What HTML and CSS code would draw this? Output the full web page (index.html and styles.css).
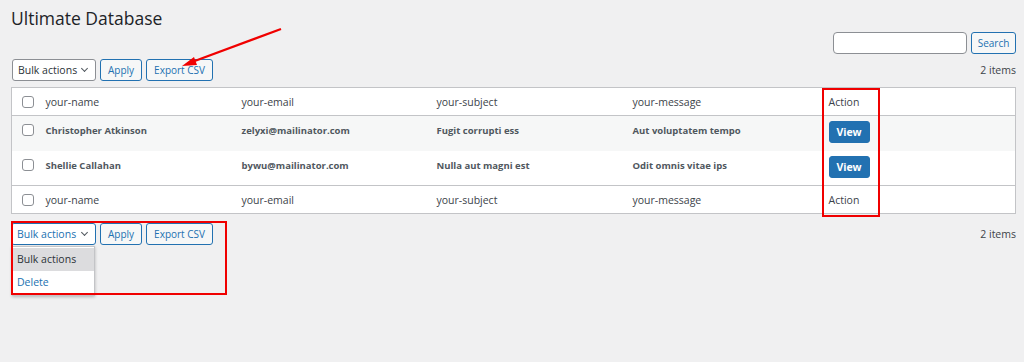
FILE: index.html
```html
<!DOCTYPE html>
<html>
<head>
<meta charset="utf-8">
<link rel="stylesheet" href="styles.css">
</head>
<body>
<div class="wrap">
  <h1 class="title">Ultimate Database</h1>
  <div class="search-row">
    <input class="search-input" type="text">
    <button class="btn btn-search">Search</button>
  </div>
  <div class="toolbar">
    <div class="actions">
      <div class="select">Bulk actions <span class="chev"></span></div>
      <button class="btn">Apply</button>
      <button class="btn">Export CSV</button>
    </div>
    <span class="count">2 items</span>
  </div>
  <table class="list">
    <thead>
      <tr>
        <td class="cb"><span class="box"></span></td>
        <td class="c-name">your-name</td>
        <td class="c-email">your-email</td>
        <td class="c-subj">your-subject</td>
        <td class="c-msg">your-message</td>
        <td class="c-act">Action</td>
      </tr>
    </thead>
    <tbody>
      <tr class="alt">
        <td class="cb"><span class="box"></span></td>
        <td><b>Christopher Atkinson</b></td>
        <td><b>zelyxi@mailinator.com</b></td>
        <td><b>Fugit corrupti ess</b></td>
        <td><b>Aut voluptatem tempo</b></td>
        <td><button class="view">View</button></td>
      </tr>
      <tr>
        <td class="cb"><span class="box"></span></td>
        <td><b>Shellie Callahan</b></td>
        <td><b>bywu@mailinator.com</b></td>
        <td><b>Nulla aut magni est</b></td>
        <td><b>Odit omnis vitae ips</b></td>
        <td><button class="view">View</button></td>
      </tr>
    </tbody>
    <tfoot>
      <tr>
        <td class="cb"><span class="box"></span></td>
        <td>your-name</td>
        <td>your-email</td>
        <td>your-subject</td>
        <td>your-message</td>
        <td>Action</td>
      </tr>
    </tfoot>
  </table>
  <div class="toolbar bottom">
    <div class="actions">
      <div class="select-wrap">
        <div class="select focus">Bulk actions <span class="chev"></span></div>
        <ul class="dropdown">
          <li class="hl">Bulk actions</li>
          <li>Delete</li>
        </ul>
      </div>
      <button class="btn">Apply</button>
      <button class="btn">Export CSV</button>
    </div>
    <span class="count">2 items</span>
  </div>
</div>

<div class="mark mark-action"></div>
<div class="mark mark-bulk"></div>
<svg class="arrow" width="1024" height="100" viewBox="0 0 1024 100">
  <line x1="281" y1="29" x2="192" y2="62" stroke="#f00000" stroke-width="2.2"/>
  <polygon points="182,66 194,57 197,65" fill="#f00000"/>
</svg>
</body>
</html>
```

FILE: styles.css
```css
* { box-sizing: border-box; }
html, body { margin: 0; padding: 0; }
body {
  background: #f0f0f1;
  font-family: "Open Sans", "Noto Sans", sans-serif;
  font-size: 10.5px;
  color: #3c434a;
  width: 1024px;
  height: 362px;
  overflow: hidden;
  position: relative;
}
.wrap {
  padding: 0 8px 0 11px;
}
.title {
  font-size: 17.5px;
  font-weight: 400;
  color: #1d2327;
  margin: 0;
  padding-top: 6px;
  line-height: 24px;
  height: 30px;
}
.search-row {
  display: flex;
  justify-content: flex-end;
  gap: 4px;
  margin-top: 2px;
}
.search-input {
  width: 134px;
  height: 22px;
  border: 1px solid #8c8f94;
  border-radius: 4px;
  background: #fff;
  padding: 0;
}
.btn {
  font-family: inherit;
  font-size: 10px;
  height: 22px;
  padding: 0 7px;
  border: 1px solid #2271b1;
  color: #2271b1;
  background: #f6f7f7;
  border-radius: 3px;
  line-height: 20px;
}
.btn-search { width: 45px; padding: 0; }
.toolbar {
  display: flex;
  justify-content: space-between;
  align-items: center;
  margin-top: 5px;
  height: 22px;
  padding-left: 1px;
}
.actions {
  display: flex;
  gap: 4px;
}
.select {
  width: 84px;
  height: 22px;
  border: 1px solid #8c8f94;
  border-radius: 3px;
  background: #fff;
  color: #2c3338;
  font-size: 10.5px;
  line-height: 20px;
  padding-left: 5px;
  position: relative;
}
.select.focus {
  border-color: #2271b1;
  color: #2271b1;
  width: 85px;
  margin-left: -1px;
}
.chev {
  position: absolute;
  right: 8px;
  top: 6px;
  width: 5px;
  height: 5px;
  border-right: 1.5px solid #50575e;
  border-bottom: 1.5px solid #50575e;
  transform: rotate(45deg);
}
.count {
  color: #3c434a;
  font-size: 10.5px;
}
.list {
  width: 100%;
  margin-top: 6px;
  border: 1px solid #c3c4c7;
  border-collapse: collapse;
  background: #fff;
  table-layout: fixed;
}
.list td {
  padding: 0;
  vertical-align: middle;
  white-space: nowrap;
  color: #3c434a;
}
.list b { font-weight: 700; color: #50575e; font-size: 9.5px; }
.list thead tr { height: 28px; border-bottom: 1px solid #c3c4c7; }
.list tbody tr { height: 35px; }
.list tbody tr.alt { background: #f6f7f7; }
.list tbody td { vertical-align: top; padding-top: 7px; }
.list tfoot tr { height: 28px; border-top: 1px solid #c3c4c7; }
.cb { width: 34px; padding-left: 10px !important; }
.c-name { width: 196px; }
.c-email { width: 195px; }
.c-subj { width: 196px; }
.c-msg { width: 196px; }
.box {
  display: block;
  width: 12px;
  height: 12px;
  border: 1px solid #8c8f94;
  border-radius: 3px;
  background: #fff;
}
.list tbody td.cb .box { margin-top: 1px; }
.view {
  font-family: inherit;
  font-size: 10.5px;
  font-weight: 700;
  color: #fff;
  background: #2271b1;
  border: 1px solid #2271b1;
  border-radius: 3px;
  width: 41px;
  height: 22px;
  padding: 0;
  margin-top: -2px;
}
.toolbar.bottom { margin-top: 9px; }
.select-wrap { position: relative; }
.dropdown {
  position: absolute;
  left: 0;
  top: 23px;
  width: 83px;
  margin: 0;
  padding: 1px 0;
  list-style: none;
  background: #fff;
  border: 1px solid #c3c4c7;
  box-shadow: 0 1px 3px rgba(0,0,0,0.25);
  z-index: 2;
}
.dropdown li {
  height: 23px;
  line-height: 22px;
  padding-left: 4px;
  color: #2271b1;
  font-size: 10.5px;
}
.dropdown li.hl { background: #dcdcde; color: #2c3338; }
.mark {
  position: absolute;
  border: 2px solid #f00000;
  z-index: 5;
}
.mark-action { left: 822px; top: 88px; width: 58px; height: 129px; }
.mark-bulk { left: 11px; top: 221px; width: 216px; height: 74px; }
.arrow { position: absolute; left: 0; top: 0; z-index: 5; }
```
